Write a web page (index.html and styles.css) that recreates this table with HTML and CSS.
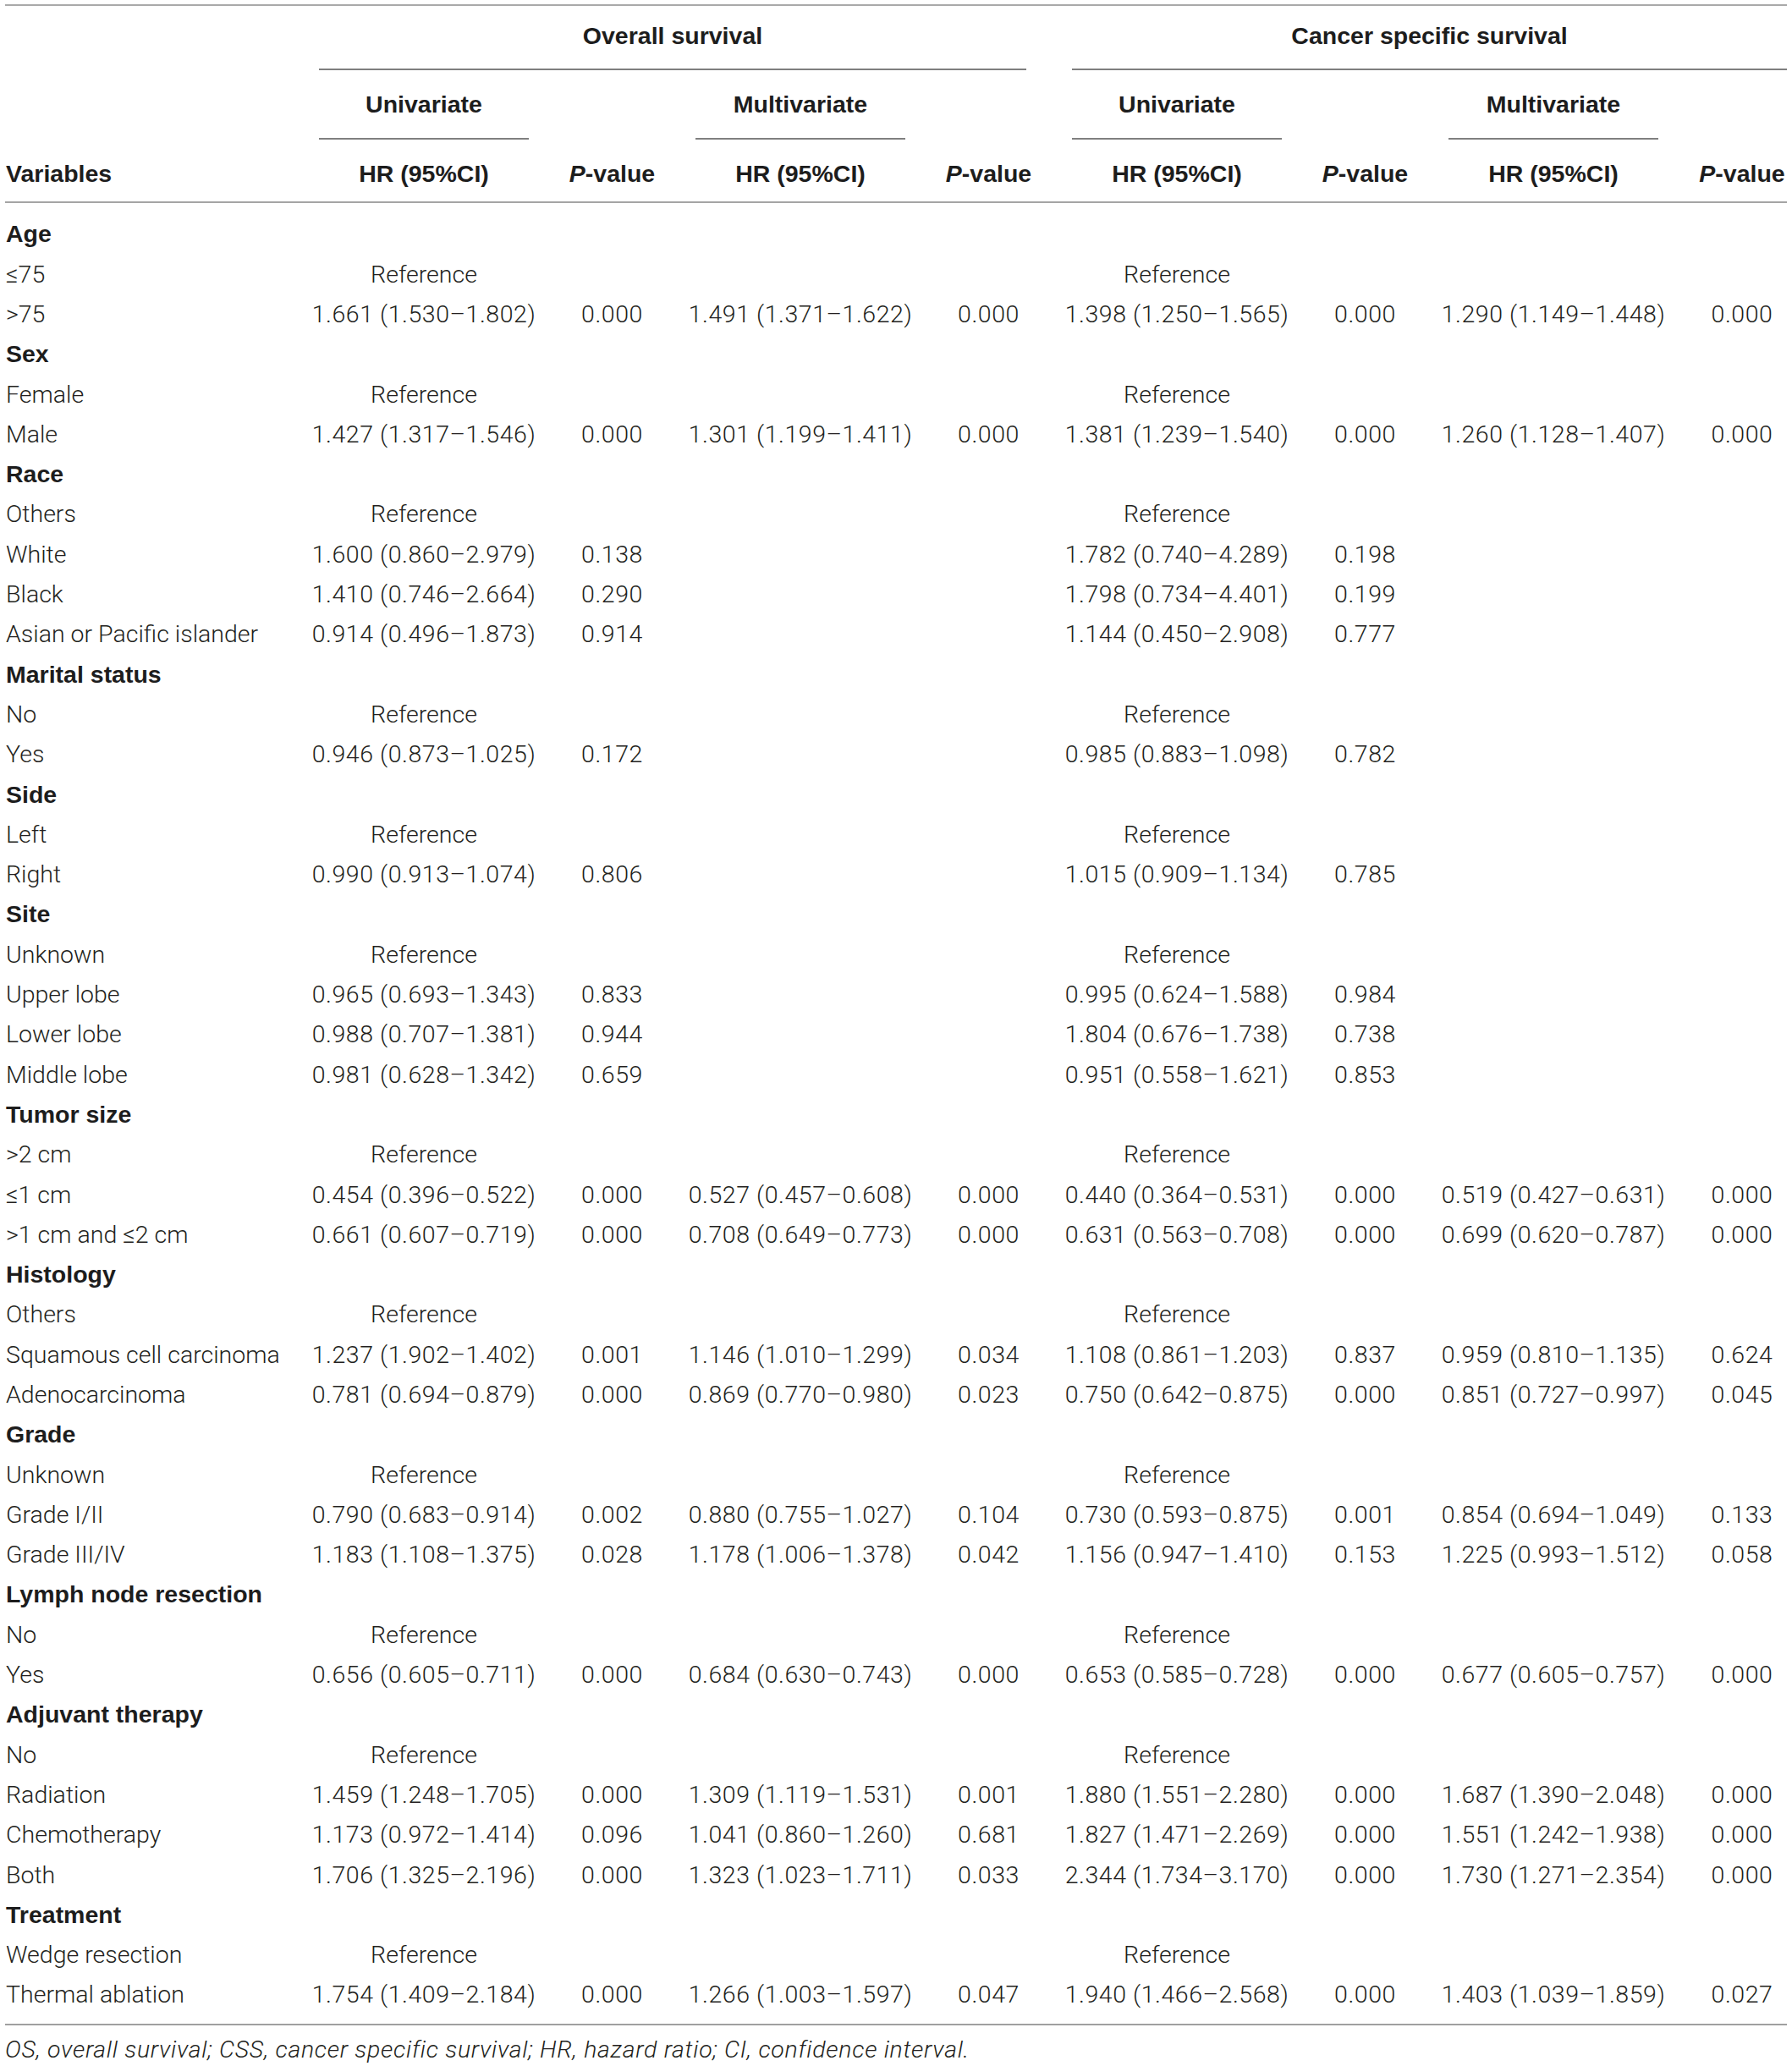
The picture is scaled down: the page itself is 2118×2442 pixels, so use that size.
FILE: index.html
```html
<!DOCTYPE html>
<html lang="en">
<head>
<meta charset="utf-8">
<title>Univariate and multivariate analysis</title>
<link rel="stylesheet" href="styles.css">
</head>
<body>
<div class="page">
<table class="tbl">
<colgroup>
<col class="c-var"><col class="c-hr"><col class="c-p"><col class="c-hr"><col class="c-p"><col class="c-hr"><col class="c-p"><col class="c-hr"><col class="c-plast">
</colgroup>
<thead>
<tr class="h1">
<th></th>
<th colspan="4"><div class="grp grp-os">Overall survival</div></th>
<th colspan="4"><div class="grp grp-css">Cancer specific survival</div></th>
</tr>
<tr class="h2">
<th></th>
<th><div class="sub">Univariate</div></th><th></th>
<th><div class="sub">Multivariate</div></th><th></th>
<th><div class="sub">Univariate</div></th><th></th>
<th><div class="sub">Multivariate</div></th><th></th>
</tr>
<tr class="h3">
<th class="var">Variables</th>
<th>HR (95%CI)</th><th><i>P</i>-value</th>
<th>HR (95%CI)</th><th><i>P</i>-value</th>
<th>HR (95%CI)</th><th><i>P</i>-value</th>
<th>HR (95%CI)</th><th class="last"><i>P</i>-value</th>
</tr>
</thead>
<tbody>
<tr class="g first"><td class="var">Age</td><td></td><td></td><td></td><td></td><td></td><td></td><td></td><td class="last"></td></tr>
<tr><td class="var">≤75</td><td class="ref">Reference</td><td></td><td></td><td></td><td class="ref">Reference</td><td></td><td></td><td class="last"></td></tr>
<tr><td class="var">&gt;75</td><td>1.661 (1.530–1.802)</td><td>0.000</td><td>1.491 (1.371–1.622)</td><td>0.000</td><td>1.398 (1.250–1.565)</td><td>0.000</td><td>1.290 (1.149–1.448)</td><td class="last">0.000</td></tr>
<tr class="g"><td class="var">Sex</td><td></td><td></td><td></td><td></td><td></td><td></td><td></td><td class="last"></td></tr>
<tr><td class="var">Female</td><td class="ref">Reference</td><td></td><td></td><td></td><td class="ref">Reference</td><td></td><td></td><td class="last"></td></tr>
<tr><td class="var">Male</td><td>1.427 (1.317–1.546)</td><td>0.000</td><td>1.301 (1.199–1.411)</td><td>0.000</td><td>1.381 (1.239–1.540)</td><td>0.000</td><td>1.260 (1.128–1.407)</td><td class="last">0.000</td></tr>
<tr class="g"><td class="var">Race</td><td></td><td></td><td></td><td></td><td></td><td></td><td></td><td class="last"></td></tr>
<tr><td class="var">Others</td><td class="ref">Reference</td><td></td><td></td><td></td><td class="ref">Reference</td><td></td><td></td><td class="last"></td></tr>
<tr><td class="var">White</td><td>1.600 (0.860–2.979)</td><td>0.138</td><td></td><td></td><td>1.782 (0.740–4.289)</td><td>0.198</td><td></td><td class="last"></td></tr>
<tr><td class="var">Black</td><td>1.410 (0.746–2.664)</td><td>0.290</td><td></td><td></td><td>1.798 (0.734–4.401)</td><td>0.199</td><td></td><td class="last"></td></tr>
<tr><td class="var">Asian or Pacific islander</td><td>0.914 (0.496–1.873)</td><td>0.914</td><td></td><td></td><td>1.144 (0.450–2.908)</td><td>0.777</td><td></td><td class="last"></td></tr>
<tr class="g"><td class="var">Marital status</td><td></td><td></td><td></td><td></td><td></td><td></td><td></td><td class="last"></td></tr>
<tr><td class="var">No</td><td class="ref">Reference</td><td></td><td></td><td></td><td class="ref">Reference</td><td></td><td></td><td class="last"></td></tr>
<tr><td class="var">Yes</td><td>0.946 (0.873–1.025)</td><td>0.172</td><td></td><td></td><td>0.985 (0.883–1.098)</td><td>0.782</td><td></td><td class="last"></td></tr>
<tr class="g"><td class="var">Side</td><td></td><td></td><td></td><td></td><td></td><td></td><td></td><td class="last"></td></tr>
<tr><td class="var">Left</td><td class="ref">Reference</td><td></td><td></td><td></td><td class="ref">Reference</td><td></td><td></td><td class="last"></td></tr>
<tr><td class="var">Right</td><td>0.990 (0.913–1.074)</td><td>0.806</td><td></td><td></td><td>1.015 (0.909–1.134)</td><td>0.785</td><td></td><td class="last"></td></tr>
<tr class="g"><td class="var">Site</td><td></td><td></td><td></td><td></td><td></td><td></td><td></td><td class="last"></td></tr>
<tr><td class="var">Unknown</td><td class="ref">Reference</td><td></td><td></td><td></td><td class="ref">Reference</td><td></td><td></td><td class="last"></td></tr>
<tr><td class="var">Upper lobe</td><td>0.965 (0.693–1.343)</td><td>0.833</td><td></td><td></td><td>0.995 (0.624–1.588)</td><td>0.984</td><td></td><td class="last"></td></tr>
<tr><td class="var">Lower lobe</td><td>0.988 (0.707–1.381)</td><td>0.944</td><td></td><td></td><td>1.804 (0.676–1.738)</td><td>0.738</td><td></td><td class="last"></td></tr>
<tr><td class="var">Middle lobe</td><td>0.981 (0.628–1.342)</td><td>0.659</td><td></td><td></td><td>0.951 (0.558–1.621)</td><td>0.853</td><td></td><td class="last"></td></tr>
<tr class="g"><td class="var">Tumor size</td><td></td><td></td><td></td><td></td><td></td><td></td><td></td><td class="last"></td></tr>
<tr><td class="var">&gt;2 cm</td><td class="ref">Reference</td><td></td><td></td><td></td><td class="ref">Reference</td><td></td><td></td><td class="last"></td></tr>
<tr><td class="var">≤1 cm</td><td>0.454 (0.396–0.522)</td><td>0.000</td><td>0.527 (0.457–0.608)</td><td>0.000</td><td>0.440 (0.364–0.531)</td><td>0.000</td><td>0.519 (0.427–0.631)</td><td class="last">0.000</td></tr>
<tr><td class="var">&gt;1 cm and ≤2 cm</td><td>0.661 (0.607–0.719)</td><td>0.000</td><td>0.708 (0.649–0.773)</td><td>0.000</td><td>0.631 (0.563–0.708)</td><td>0.000</td><td>0.699 (0.620–0.787)</td><td class="last">0.000</td></tr>
<tr class="g"><td class="var">Histology</td><td></td><td></td><td></td><td></td><td></td><td></td><td></td><td class="last"></td></tr>
<tr><td class="var">Others</td><td class="ref">Reference</td><td></td><td></td><td></td><td class="ref">Reference</td><td></td><td></td><td class="last"></td></tr>
<tr><td class="var">Squamous cell carcinoma</td><td>1.237 (1.902–1.402)</td><td>0.001</td><td>1.146 (1.010–1.299)</td><td>0.034</td><td>1.108 (0.861–1.203)</td><td>0.837</td><td>0.959 (0.810–1.135)</td><td class="last">0.624</td></tr>
<tr><td class="var">Adenocarcinoma</td><td>0.781 (0.694–0.879)</td><td>0.000</td><td>0.869 (0.770–0.980)</td><td>0.023</td><td>0.750 (0.642–0.875)</td><td>0.000</td><td>0.851 (0.727–0.997)</td><td class="last">0.045</td></tr>
<tr class="g"><td class="var">Grade</td><td></td><td></td><td></td><td></td><td></td><td></td><td></td><td class="last"></td></tr>
<tr><td class="var">Unknown</td><td class="ref">Reference</td><td></td><td></td><td></td><td class="ref">Reference</td><td></td><td></td><td class="last"></td></tr>
<tr><td class="var">Grade I/II</td><td>0.790 (0.683–0.914)</td><td>0.002</td><td>0.880 (0.755–1.027)</td><td>0.104</td><td>0.730 (0.593–0.875)</td><td>0.001</td><td>0.854 (0.694–1.049)</td><td class="last">0.133</td></tr>
<tr><td class="var">Grade III/IV</td><td>1.183 (1.108–1.375)</td><td>0.028</td><td>1.178 (1.006–1.378)</td><td>0.042</td><td>1.156 (0.947–1.410)</td><td>0.153</td><td>1.225 (0.993–1.512)</td><td class="last">0.058</td></tr>
<tr class="g"><td class="var">Lymph node resection</td><td></td><td></td><td></td><td></td><td></td><td></td><td></td><td class="last"></td></tr>
<tr><td class="var">No</td><td class="ref">Reference</td><td></td><td></td><td></td><td class="ref">Reference</td><td></td><td></td><td class="last"></td></tr>
<tr><td class="var">Yes</td><td>0.656 (0.605–0.711)</td><td>0.000</td><td>0.684 (0.630–0.743)</td><td>0.000</td><td>0.653 (0.585–0.728)</td><td>0.000</td><td>0.677 (0.605–0.757)</td><td class="last">0.000</td></tr>
<tr class="g"><td class="var">Adjuvant therapy</td><td></td><td></td><td></td><td></td><td></td><td></td><td></td><td class="last"></td></tr>
<tr><td class="var">No</td><td class="ref">Reference</td><td></td><td></td><td></td><td class="ref">Reference</td><td></td><td></td><td class="last"></td></tr>
<tr><td class="var">Radiation</td><td>1.459 (1.248–1.705)</td><td>0.000</td><td>1.309 (1.119–1.531)</td><td>0.001</td><td>1.880 (1.551–2.280)</td><td>0.000</td><td>1.687 (1.390–2.048)</td><td class="last">0.000</td></tr>
<tr><td class="var">Chemotherapy</td><td>1.173 (0.972–1.414)</td><td>0.096</td><td>1.041 (0.860–1.260)</td><td>0.681</td><td>1.827 (1.471–2.269)</td><td>0.000</td><td>1.551 (1.242–1.938)</td><td class="last">0.000</td></tr>
<tr><td class="var">Both</td><td>1.706 (1.325–2.196)</td><td>0.000</td><td>1.323 (1.023–1.711)</td><td>0.033</td><td>2.344 (1.734–3.170)</td><td>0.000</td><td>1.730 (1.271–2.354)</td><td class="last">0.000</td></tr>
<tr class="g"><td class="var">Treatment</td><td></td><td></td><td></td><td></td><td></td><td></td><td></td><td class="last"></td></tr>
<tr><td class="var">Wedge resection</td><td class="ref">Reference</td><td></td><td></td><td></td><td class="ref">Reference</td><td></td><td></td><td class="last"></td></tr>
<tr class="lastrow"><td class="var">Thermal ablation</td><td>1.754 (1.409–2.184)</td><td>0.000</td><td>1.266 (1.003–1.597)</td><td>0.047</td><td>1.940 (1.466–2.568)</td><td>0.000</td><td>1.403 (1.039–1.859)</td><td class="last">0.027</td></tr>
</tbody>
</table>
<p class="foot">OS, overall survival; CSS, cancer specific survival; HR, hazard ratio; CI, confidence interval.</p>
</div>
</body>
</html>
```
FILE: styles.css
```css
html, body {
  margin: 0;
  padding: 0;
  background: #ffffff;
}

.page {
  padding: 5px 6px 0 6px;
  color: #231f20;
}

.tbl {
  border-collapse: separate;
  border-spacing: 0;
  table-layout: fixed;
  width: 2106px;
  border-top: 2px solid #a9a9a9;
  border-bottom: 2px solid #a0a0a0;
}

.c-var { width: 348px; }
.c-hr { width: 294px; }
.c-p { width: 151px; }
.c-plast { width: 129px; }

.tbl th {
  font-family: "Liberation Sans", Arial, sans-serif;
  font-weight: 700;
  font-size: 28.5px;
  line-height: 34px;
  color: #1d1d1d;
  text-align: center;
  white-space: nowrap;
  padding: 0;
  vertical-align: top;
}

.tbl th i {
  font-style: italic;
}

.grp {
  padding: 18px 0 22px 0;
  border-bottom: 2px solid #7f7f7f;
}

.grp-os {
  margin: 0 31px 0 23px;
}

.grp-css {
  margin: 0 0 0 23px;
}

.sub {
  padding: 23px 0 23px 0;
  margin: 0 23px;
  border-bottom: 2px solid #7f7f7f;
}

.h3 th {
  padding: 23px 0 16px 0;
  border-bottom: 2px solid #a5a5a5;
}

.tbl th.var {
  text-align: left;
  padding-left: 1px;
}

.tbl th.last,
.tbl td.last {
  padding-left: 23px;
}

.tbl td {
  font-family: Roboto, "Liberation Sans", Arial, sans-serif;
  font-weight: 300;
  font-size: 28.5px;
  line-height: 47.3px;
  letter-spacing: 0.55px;
  color: #231f20;
  text-align: center;
  white-space: nowrap;
  padding: 0;
  vertical-align: top;
}

.tbl td.ref {
  letter-spacing: 0;
}

.tbl td.var {
  text-align: left;
  padding-left: 1px;
  letter-spacing: 0;
}

.tbl tr.g td.var {
  font-family: "Liberation Sans", Arial, sans-serif;
  font-weight: 700;
  color: #1d1d1d;
}

.tbl tr.first td {
  padding-top: 13.4px;
}

.tbl tr.lastrow td {
  padding-bottom: 10.2px;
}

.foot {
  margin: 12px 0 0 0;
  padding: 0;
  font-family: Roboto, "Liberation Sans", Arial, sans-serif;
  font-weight: 300;
  font-style: italic;
  font-size: 28.5px;
  line-height: 34px;
  letter-spacing: 0.7px;
  color: #231f20;
}
```
